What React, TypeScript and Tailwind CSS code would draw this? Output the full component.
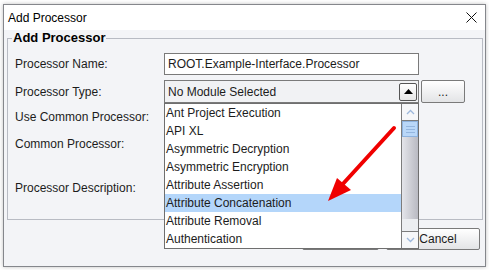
import { useState } from 'react';

const TYPES = [
  'Ant Project Execution',
  'API XL',
  'Asymmetric Decryption',
  'Asymmetric Encryption',
  'Attribute Assertion',
  'Attribute Concatenation',
  'Attribute Removal',
  'Authentication',
];

function Label({ text, h, mt }: { text: string; h: string; mt: string }) {
  return (
    <div className={`flex items-center pl-[7px] ${h} ${mt}`}>
      <span className="text-[12px] text-[#1c1c1c]">{text}</span>
    </div>
  );
}

function ScrollBar() {
  return (
    <div className="flex flex-col w-[17px] border-l border-[#7c7c7c] bg-white">
      <div className="h-[17px] border-b border-[#7c7c7c] flex items-center justify-center bg-[#f6f7f9]">
        <svg width="9" height="6" viewBox="0 0 9 6">
          <path d="M1 5 L4.5 1.5 L8 5" fill="none" stroke="#9db8dc" strokeWidth="1.3" />
        </svg>
      </div>
      <div className="h-[16px] bg-[#b9d7f8] border border-[#8fb3de] flex flex-col items-center justify-center gap-[2px]">
        <div className="w-[9px] h-px bg-[#94b6df]" />
        <div className="w-[9px] h-px bg-[#94b6df]" />
        <div className="w-[9px] h-px bg-[#94b6df]" />
      </div>
      <div className="flex-1 bg-gradient-to-r from-[#e4e5ea] to-[#b9bac2]" />
      <div className="h-[12px] bg-[#eceef1]" />
      <div className="h-[17px] border-t border-[#7c7c7c] flex items-center justify-center bg-[#f6f7f9]">
        <svg width="9" height="6" viewBox="0 0 9 6">
          <path d="M1 1 L4.5 4.5 L8 1" fill="none" stroke="#9db8dc" strokeWidth="1.3" />
        </svg>
      </div>
    </div>
  );
}

export default function App() {
  const [selected] = useState(5);

  return (
    <div className="relative w-[489px] h-[270px] bg-white overflow-hidden" style={{ fontFamily: '"Liberation Sans", Arial, sans-serif' }}>
      <div className="ml-[3px] mt-[4px] w-[483px] h-[263px] border border-[#85878c] shadow-[0_0_4px_rgba(0,0,0,0.25)] flex flex-col">
        <div className="h-[25px] bg-white flex items-center justify-between pl-[4px] pr-[8px]">
          <span className="text-[12px] text-black">Add Processor</span>
          <svg width="11" height="11" viewBox="0 0 11 11">
            <path d="M0.5 0.5 L10.5 10.5 M10.5 0.5 L0.5 10.5" stroke="#111" strokeWidth="1" />
          </svg>
        </div>

        <div className="flex-1 bg-[#f3f4f7] flex flex-col">
          <div className="mt-[8px] ml-[3px] mr-[2px] h-[182px] border border-[#b8bbc3] flex flex-col">
            <div className="-mt-[9px] h-[16px] flex pl-[4px]">
              <span className="px-[1px] bg-[#f3f4f7] text-[13px] leading-[16px] font-bold text-black">
                Add Processor
              </span>
            </div>
            <div className="flex">
              <div className="w-[156px] flex flex-col">
                <Label text="Processor Name:" h="h-[22px]" mt="mt-[7px]" />
                <Label text="Processor Type:" h="h-[23px]" mt="mt-[5px]" />
                <Label text="Use Common Processor:" h="h-[24px]" mt="mt-[2px]" />
                <Label text="Common Processor:" h="h-[24px]" mt="mt-[3px]" />
                <Label text="Processor Description:" h="h-[60px]" mt="mt-[2px]" />
              </div>
              <div className="flex flex-col">
                <div className="mt-[7px] w-[255px] h-[22px] border border-[#7a7a7a] bg-white flex items-center pl-[3px]">
                  <span className="text-[12px] text-[#1c1c1c]">ROOT.Example-Interface.Processor</span>
                </div>
                <div className="mt-[5px] flex">
                  <div className="w-[255px] h-[23px] border border-[#7a7a7a] bg-[#f1f2f4] flex items-center justify-between pl-[3px] pr-[1px]">
                    <span className="text-[12px] text-[#1c1c1c]">No Module Selected</span>
                    <div className="w-[18px] h-[18px] border border-[#555] rounded-[2px] bg-gradient-to-b from-white to-[#e6e6e6] flex items-center justify-center">
                      <svg width="9" height="5" viewBox="0 0 9 5">
                        <path d="M0 5 L4.5 0 L9 5 Z" fill="#000" />
                      </svg>
                    </div>
                  </div>
                  <div className="ml-[2px] w-[44px] h-[23px] border border-[#7a7a7a] rounded-[2px] bg-gradient-to-b from-white to-[#e3e4e6] flex items-center justify-center">
                    <span className="text-[12px] text-[#1c1c1c] leading-none">...</span>
                  </div>
                </div>
              </div>
            </div>
          </div>

          <div className="mt-[8px] flex justify-end gap-[7px] pr-[5px]">
            <div className="w-[77px] h-[22px] border border-[#7a7a7a] rounded-[2px] bg-gradient-to-b from-white to-[#e3e4e6] flex items-center justify-center">
              <span className="text-[12px] text-[#1c1c1c]">OK</span>
            </div>
            <div className="w-[94px] h-[22px] border border-[#7a7a7a] rounded-[2px] bg-gradient-to-b from-white to-[#e3e4e6] flex items-center justify-center">
              <span className="text-[12px] text-[#1c1c1c] ml-[10px]">Cancel</span>
            </div>
          </div>
        </div>
      </div>

      {/* open combo popup */}
      <div className="absolute left-[164px] top-[103px] w-[255px] h-[146px] border border-[#6f6f6f] bg-white flex">
        <div className="flex-1 flex flex-col">
          {TYPES.map((t, i) => (
            <div key={t} className={`h-[18px] flex items-center pl-[1px] ${i === selected ? 'bg-[#b4d6fa]' : ''}`}>
              <span className="text-[12px] text-[#1c1c1c]">{t}</span>
            </div>
          ))}
        </div>
        <ScrollBar />
      </div>

      {/* annotation arrow */}
      <svg className="absolute left-0 top-0" width="489" height="270" viewBox="0 0 489 270">
        <path d="M394 128 L341 186" stroke="#f00000" strokeWidth="4" strokeLinecap="round" />
        <path d="M328 201 L337 178 L351 190 Z" fill="#f00000" />
      </svg>
    </div>
  );
}
